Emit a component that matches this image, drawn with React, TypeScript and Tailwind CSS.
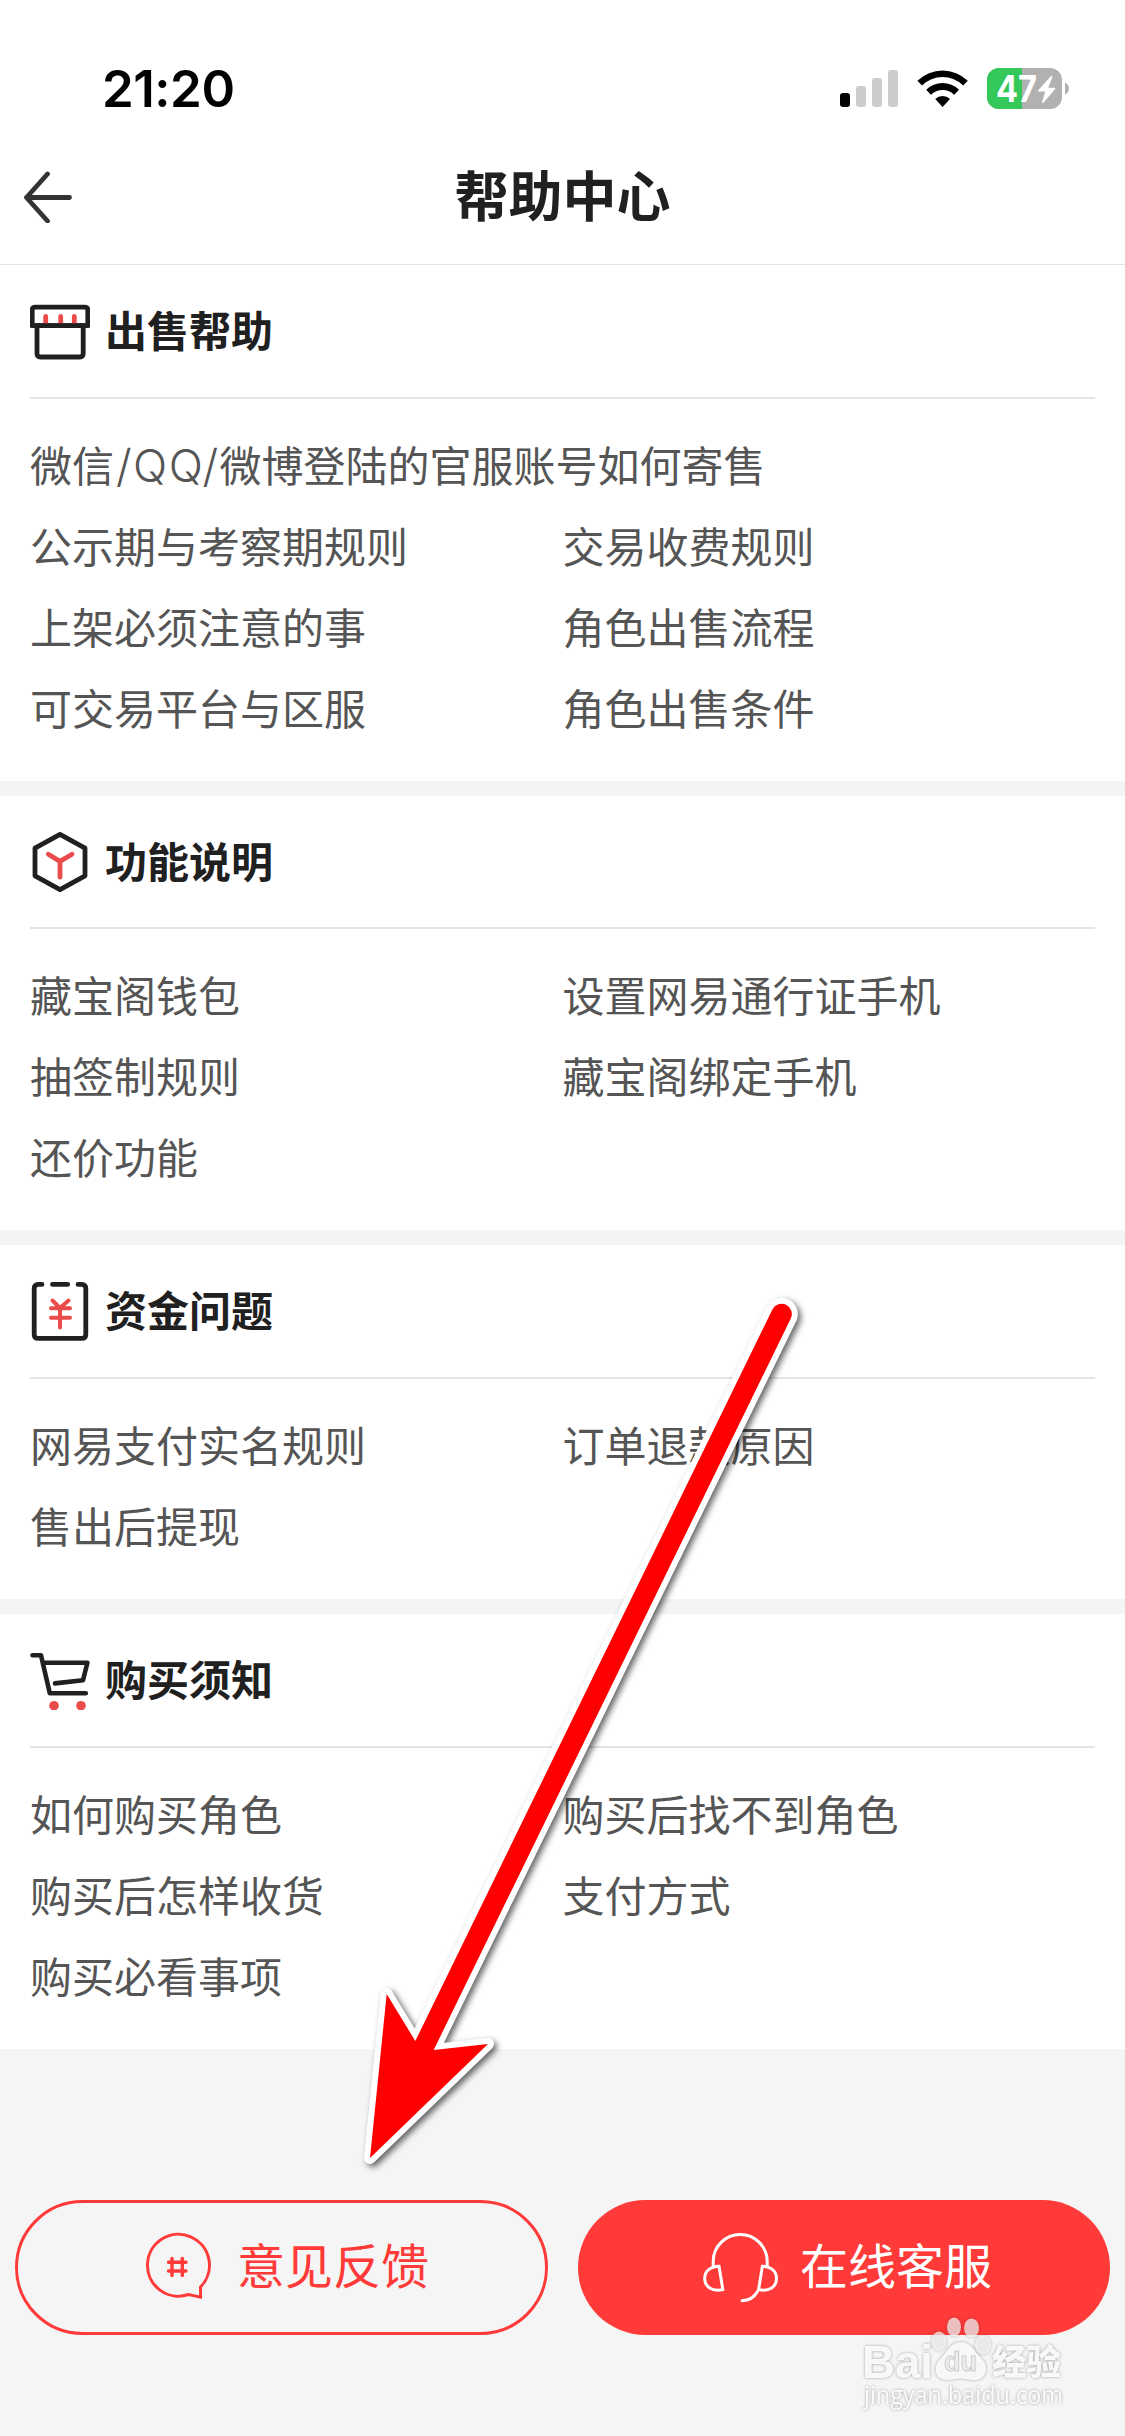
import type { ReactNode } from "react";

type Item = { text: string; wide?: boolean };

const line = {
  fill: "none",
  stroke: "#202020",
  strokeWidth: 4.8,
  strokeLinecap: "round" as const,
  strokeLinejoin: "round" as const,
};
const red = { ...line, stroke: "#ea4c4c" };

const ShopIcon = () => (
  <svg viewBox="0 0 60 60" className="size-[60px]">
    <path d="M2.2 24.6V9.2q0-3 3-3h49.6q3 0 3 3v15.4z" {...line} />
    <path d="M7 25v27.6q0 3.4 3.4 3.4h39.4q3.4 0 3.4-3.4V25" {...line} />
    <path d="M15.7 15.5v7M30.7 15.5v7M44.3 15.5v7" {...red} />
    <path d="M2.2 24.6h55.6" {...line} />
  </svg>
);

const HexIcon = () => (
  <svg viewBox="0 0 60 60" className="size-[60px]">
    <path d="M30 2.4 55 16.2v27.6L30 57.6 5 43.8V16.2z" {...line} />
    <path d="M18.3 22.2 30 29.4l12-7.2M30 29.4v15.8" {...red} />
  </svg>
);

const MoneyIcon = () => (
  <svg viewBox="0 0 60 60" className="size-[60px]">
    <path d="M12 3.4H8.2q-4 0-4 4v46q0 4 4 4h43.6q4 0 4-4v-46q0-4-4-4H48M22.5 3.4h15.2" {...line} />
    <path d="M22.5 19.5 30 27l8.5-7.5M30 27v19.5M21 27.3h19M21 36.7h19" {...red} strokeWidth={4} />
  </svg>
);

const CartIcon = () => (
  <svg viewBox="0 0 60 60" className="size-[60px]">
    <path d="M2.5 5.3H11l8.8 38h36M14 12.7h43.4L53 30.2l-28 3.2" {...line} strokeWidth={4.6} />
    <circle cx="24" cy="55.7" r="4.8" fill="#ea4c4c" />
    <circle cx="51" cy="55.7" r="4.8" fill="#ea4c4c" />
  </svg>
);

const sections: { title: string; icon: ReactNode; items: Item[] }[] = [
  {
    title: "出售帮助",
    icon: <ShopIcon />,
    items: [
      { text: "微信/QQ/微博登陆的官服账号如何寄售", wide: true },
      { text: "公示期与考察期规则" },
      { text: "交易收费规则" },
      { text: "上架必须注意的事" },
      { text: "角色出售流程" },
      { text: "可交易平台与区服" },
      { text: "角色出售条件" },
    ],
  },
  {
    title: "功能说明",
    icon: <HexIcon />,
    items: [
      { text: "藏宝阁钱包" },
      { text: "设置网易通行证手机" },
      { text: "抽签制规则" },
      { text: "藏宝阁绑定手机" },
      { text: "还价功能" },
    ],
  },
  {
    title: "资金问题",
    icon: <MoneyIcon />,
    items: [{ text: "网易支付实名规则" }, { text: "订单退款原因" }, { text: "售出后提现" }],
  },
  {
    title: "购买须知",
    icon: <CartIcon />,
    items: [
      { text: "如何购买角色" },
      { text: "购买后找不到角色" },
      { text: "购买后怎样收货" },
      { text: "支付方式" },
      { text: "购买必看事项" },
    ],
  },
];

// Latin runs inside a Chinese label get Inter and a little more air
function Label({ text }: { text: string }) {
  return (
    <>
      {text.split(/([\x20-\x7e]+)/).map((part, i) =>
        i % 2 ? (
          <span key={i} className={"pl-[2px] font-['Inter'] text-[45px] font-light leading-none " + (part.length > 1 ? "tracking-[1.4px]" : "")}>{part}</span>
        ) : (
          part
        )
      )}
    </>
  );
}

function StatusBar() {
  return (
    <div className="flex h-[132px] items-start justify-between pl-[102px] pr-[56px] pt-[68px]">
      <span className="mt-[-10px] font-['Inter'] text-[51px] font-semibold leading-[62px] tracking-[-0.5px] text-black">21:20</span>
      <div className="flex h-[41px] items-center">
        <svg viewBox="0 0 58 41" className="h-[41px] w-[58px]">
          <rect x="0" y="25" width="10" height="14" rx="3" fill="#000" />
          <rect x="16" y="18" width="10" height="21" rx="3" fill="#ccc" />
          <rect x="32" y="10" width="10" height="29" rx="3" fill="#ccc" />
          <rect x="48" y="2" width="10" height="37" rx="3" fill="#ccc" />
        </svg>
        <svg viewBox="0 0 52 41" className="ml-[19px] h-[41px] w-[52px]">
          <path d="M.4 12.7a36.3 36.3 0 0 1 50.4 0L46.2 17.4a29.6 29.6 0 0 0-41.2 0z" />
          <path d="M9.2 21.7a23.6 23.6 0 0 1 32.8 0L37.3 26.7a16.8 16.8 0 0 0-23.4 0z" />
          <path d="M18.2 30.9a10.7 10.7 0 0 1 14.8 0L25.6 39z" />
        </svg>
        <svg viewBox="0 0 82 41" className="ml-[18px] h-[41px] w-[82px] overflow-visible">
          <rect x="0" y="0" width="75" height="41" rx="12" fill="#b1b1b1" />
          <path d="M12 0H35v41H12A12 12 0 0 1 0 29V12A12 12 0 0 1 12 0z" fill="#34c759" />
          <path d="M78 14.5q4 2 4 6t-4 6z" fill="#b1b1b1" />
          <text x="9" y="34" fontSize="37" fontWeight="700" fill="#fff" fontFamily="Inter, sans-serif" textLength="41" lengthAdjust="spacingAndGlyphs">47</text>
          <path d="M64 8 51 22.5q-.6 1.1.6 1.1h6.6L55 34.5q.6 1 1.6 0L68.2 21q.6-1.2-.8-1.2H61.2L65.4 9q-.3-1.4-1.4-1z" fill="#fff" />
        </svg>
      </div>
    </div>
  );
}

function Watermark() {
  return (
    <svg
      viewBox="0 0 214 108"
      className="absolute left-[856px] top-[2310px] h-[108px] w-[214px] overflow-visible [filter:drop-shadow(0_0_1.5px_rgba(0,0,0,.38))]"
      fill="#fff"
    >
      <g opacity=".9">
        <text x="6" y="68" fontSize="47" fontWeight="700" fontFamily="Liberation Sans, sans-serif" textLength="71" lengthAdjust="spacingAndGlyphs">Bai</text>
        <path d="M105 32c10 0 13 9 20 16 9 9 5 22-6 22-6 0-9-1.5-14-1.5S96 70 91 70c-12 0-15-13-6-22 7-7 10-16 20-16z" />
        <text x="88" y="61" fontSize="27" fontWeight="700" fontFamily="Liberation Sans, sans-serif" fill="#f6f6f6" stroke="#cfcfcf" strokeWidth="1" textLength="33" lengthAdjust="spacingAndGlyphs">du</text>
        <text x="136" y="65" fontSize="35" fontWeight="900" fontFamily="Noto Sans CJK SC, sans-serif" textLength="69" lengthAdjust="spacingAndGlyphs">经验</text>
        <text x="8" y="94" fontSize="26" fontFamily="Open Sans, sans-serif" textLength="199" lengthAdjust="spacingAndGlyphs">jingyan.baidu.com</text>
      </g>
      <g opacity=".7">
        <ellipse cx="83" cy="31" rx="7.5" ry="9.5" />
        <ellipse cx="98" cy="17" rx="7" ry="9.5" />
        <ellipse cx="115.5" cy="18" rx="7.5" ry="9.5" />
        <ellipse cx="127" cy="35" rx="8" ry="9.5" />
      </g>
    </svg>
  );
}

export default function App() {
  return (
    <div className="relative h-[2436px] w-[1125px] overflow-hidden bg-[#f5f5f5] font-['Noto_Sans_CJK_SC',sans-serif]">
      <header className="h-[265px] border-b border-[#e4e4e4] bg-white">
        <StatusBar />
        <div className="grid h-[130px] grid-cols-[1fr_auto_1fr] items-center px-[22px]">
          <svg viewBox="0 0 52 52" className="size-[52px]" fill="none" stroke="#333" strokeWidth="4.8" strokeLinecap="round" strokeLinejoin="round">
            <path d="M25.5 3 4.5 26.5l21 23.5M4.5 26.5H47.5" />
          </svg>
          <h1 className="pb-[6px] text-[54px] font-bold leading-[80px] text-[#202020]">帮助中心</h1>
        </div>
      </header>

      <main className="flex flex-col gap-[15px] bg-[#f4f4f4]">
        {sections.map((s) => (
          <section key={s.title} className="bg-white px-[30px]">
            <div className="flex h-[133.7px] items-center gap-[15px] border-b-2 border-[#e4e4e4]">
              {s.icon}
              <h2 className="pb-[4px] text-[42px] font-bold leading-[60px] text-[#202020]">{s.title}</h2>
            </div>
            <ul className="grid grid-cols-2 pb-[34px] pt-[24px]">
              {s.items.map((it) => (
                <li
                  key={it.text}
                  className={"h-[81px] whitespace-nowrap text-[42px] leading-[81px] text-[#555] " + (it.wide ? "col-span-2" : "")}
                >
                  <Label text={it.text} />
                </li>
              ))}
            </ul>
          </section>
        ))}
      </main>

      <footer className="flex gap-[30px] px-[15px] pt-[151px] text-[48px]">
        <button className="flex h-[135px] w-[533px] items-center gap-[22px] rounded-full border-3 border-[#ff3a38] pl-[122px] text-[#ff3a38]">
          <svg viewBox="0 0 75 75" className="size-[75px]" fill="none" stroke="currentColor" strokeWidth="3">
            <path d="M60.5 57A31 31 0 1 0 48.6 64.5l12 2.6z" />
            <path d="M32 28.5v17M42.3 28.5v17M28.5 32.3h17.5M28.5 41h17.5" strokeWidth="3.4" strokeLinecap="round" />
          </svg>
          <span className="pb-[9px]">意见反馈</span>
        </button>
        <button className="flex h-[135px] w-[532px] items-center gap-[22px] rounded-full bg-[#ff3a38] pl-[125px] text-white">
          <svg viewBox="0 0 75 75" className="size-[75px]" fill="none" stroke="currentColor" strokeWidth="3">
            <path d="M10.2 37V31.5a27 27 0 0 1 54 0V37" />
            <path d="M16 36.2 19.8 59.5C9 62 1.7 56.5 1.7 48.5 1.7 41 7.5 36.5 16 36.2zM59.4 36.2 55.6 59.5C66.4 62 73.5 56.5 73.5 48.5 73.5 41 67.7 36.5 59.4 36.2z" />
            <path d="M54.5 61.5q-5 9-15.5 9.2" strokeLinecap="round" />
          </svg>
          <span className="pb-[9px]">在线客服</span>
        </button>
      </footer>

      <Watermark />

      {/* pointer arrow lying over the list */}
      <svg viewBox="0 0 480 900" className="pointer-events-none absolute left-[340px] top-[1280px] h-[900px] w-[480px] [filter:drop-shadow(3px_3px_3px_rgba(0,0,0,.6))]">
        <path
          d="M432.4 29.5A10.2 10.2 0 0 1 450.8 38.5L93.7 770 148 764 30 878 46.7 714 75.3 761z"
          fill="#f00"
          stroke="#fff"
          strokeWidth="12"
          strokeLinejoin="round"
          paintOrder="stroke"
        />
      </svg>
    </div>
  );
}
